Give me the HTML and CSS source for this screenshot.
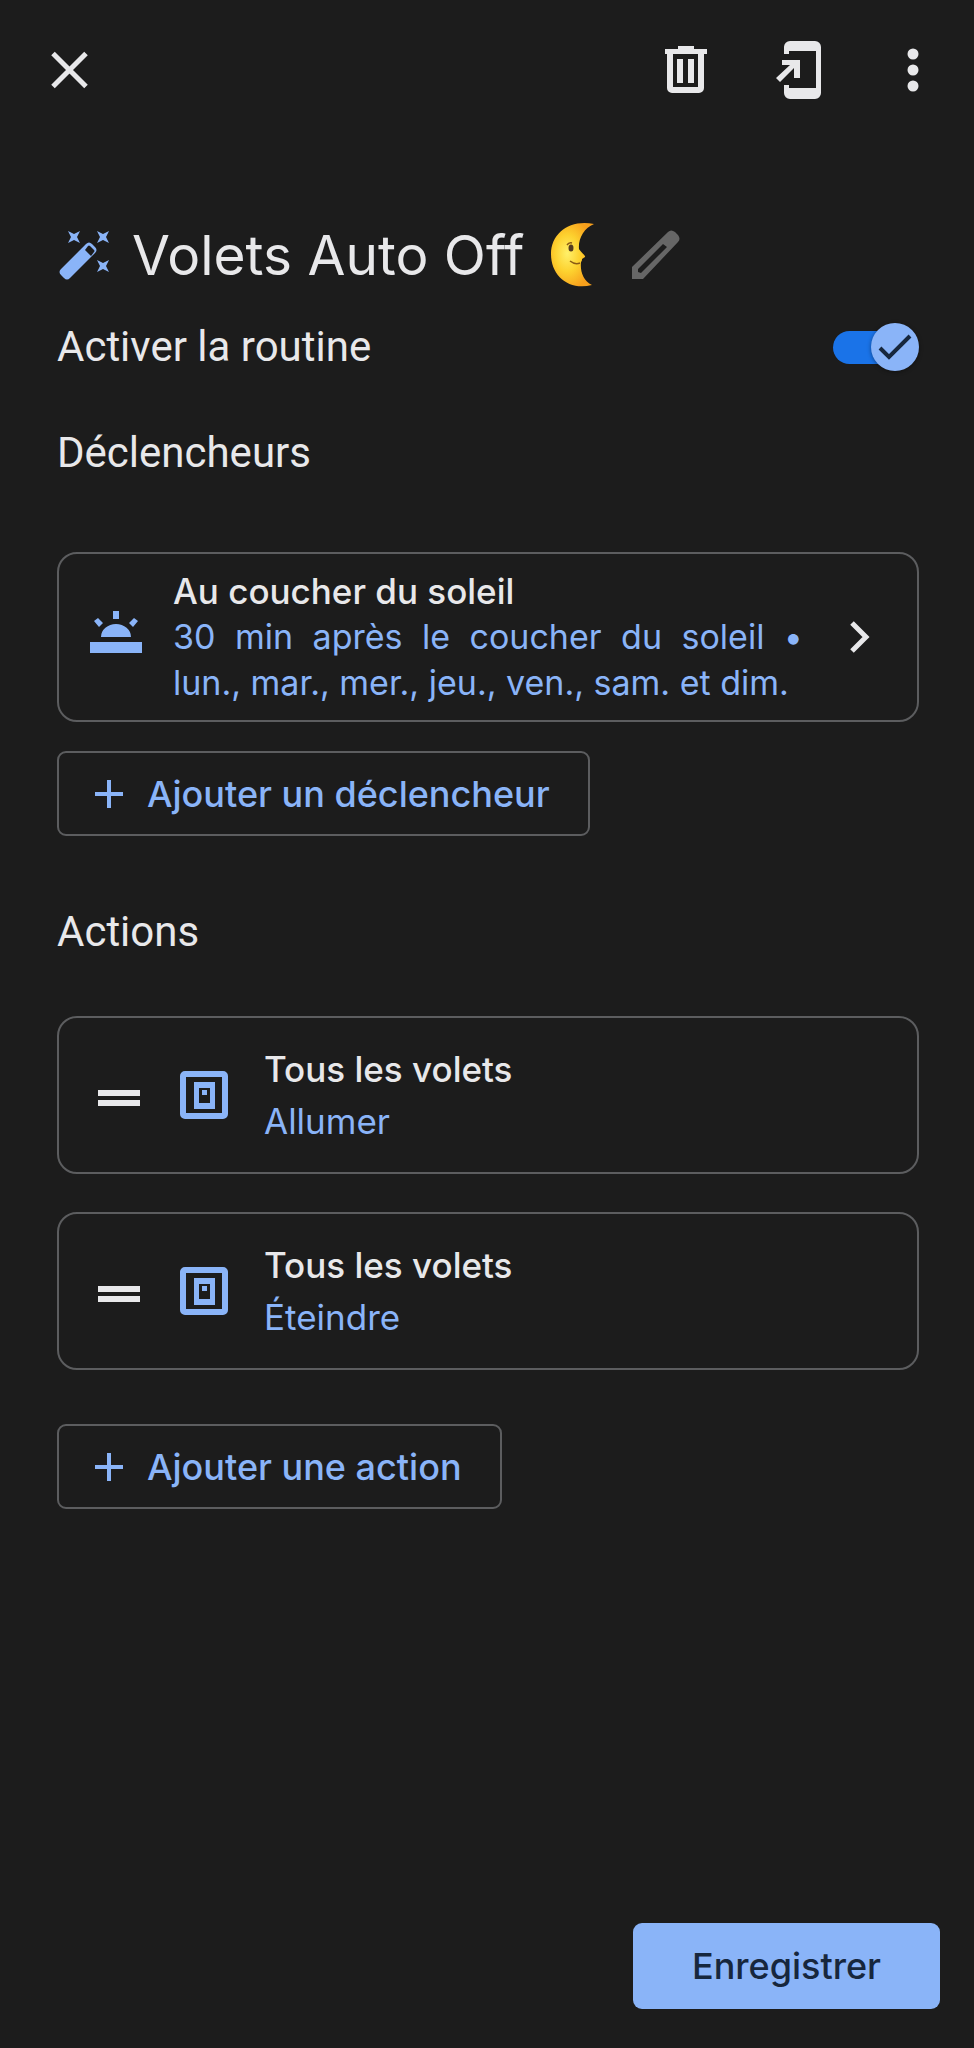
FILE: index.html
```html
<!DOCTYPE html>
<html lang="fr">
<head>
  <meta charset="UTF-8">
  <meta name="viewport" content="width=device-width, initial-scale=1">
  <title>Volets Auto Off</title>
  <link rel="stylesheet" href="styles.css">
</head>
<body>
  <header class="barre">
    <button class="icone" aria-label="Fermer">
      <svg width="60" height="60" viewBox="0 0 60 60"><path d="M13 13.500L46 46.500M46 13.500L13 46.500" stroke="currentColor" stroke-width="5"/></svg>
    </button>
    <div class="outils">
      <button class="icone" aria-label="Supprimer">
        <svg width="60" height="60" viewBox="0 0 60 60" fill="currentColor">
          <path fill-rule="evenodd" d="M22 6h16v3h13v5h-3v34a5 5 0 0 1-5 5H16a5 5 0 0 1-5-5V14H9V9h13zM17 14v33h25V14z"/>
          <path d="M21 19h6v24h-6zM32 19h6v24h-6z"/>
        </svg>
      </button>
      <button class="icone" aria-label="Ajouter à l'écran d'accueil">
        <svg width="60" height="60" viewBox="0 0 60 60" fill="currentColor">
          <path d="M15 14V7a6 6 0 0 1 6-6h25a6 6 0 0 1 6 6v46a6 6 0 0 1-6 6H21a6 6 0 0 1-6-6v-8h5v3h27V11H20v3z"/>
          <path d="M13 20h18v18h-6V28L11 42l-4-4 14-13h-8z"/>
        </svg>
      </button>
      <button class="icone" aria-label="Plus d'options">
        <svg width="60" height="60" viewBox="0 0 60 60" fill="currentColor"><circle cx="31" cy="14" r="5.500"/><circle cx="31" cy="30" r="5.500"/><circle cx="31" cy="46" r="5.500"/></svg>
      </button>
    </div>
  </header>

  <main class="contenu">
    <div class="titre">
      <svg class="bleu" width="54" height="54" viewBox="0 0 54 54" fill="currentColor">
        <path fill-rule="evenodd" d="M4 41L29 16q3-3 6 0l3 3q3 3 0 6L13 50q-3 3-6 0l-3-3q-3-3 0-6zM28 22l6 6 3-4q1-1 0-2l-4-4q-1-1-2 0z"/>
        <path d="M11 3l6 3 6-3-3 6 3 6-6-3-6 3 3-6zM40 3l6 3 6-3-3 6 3 6-6-3-6 3 3-6zM40 32l6 3 6-3-3 6 3 6-6-3-6 3 3-6z"/>
      </svg>
      <h1>Volets Auto Off</h1>
      <svg class="lune" width="46" height="66" viewBox="0 0 46 66" role="img" aria-label="Lune">
        <defs>
          <radialGradient id="jaune" cx="38%" cy="48%" r="58%">
            <stop offset="0" stop-color="#fff06a"/>
            <stop offset=".5" stop-color="#fdd22f"/>
            <stop offset="1" stop-color="#f7a01c"/>
          </radialGradient>
        </defs>
        <path d="M44 2C20-3 1 11 1 32c0 22 18 37 41 31-9-4-12-14-11-23 1-1 1-2 1-3l3-2c1-1-5-6-6-8C28 17 34 6 44 2z" fill="url(#jaune)"/>
        <ellipse cx="21" cy="26" rx="2.500" ry="3.500" fill="#543b20"/>
        <path d="M17 23q2-3 5-2M20 39q5 4 10 2" fill="none" stroke="#8a5a14" stroke-width="1.500"/>
      </svg>
      <button class="crayon" aria-label="Modifier le nom">
        <svg width="50" height="50" viewBox="0 0 50 50" fill="currentColor">
          <path fill-rule="evenodd" d="M1 37L37 2q3-3 7 0l3 3q3 4 0 7L12 49H1zM7 39v3l3 1 26-26-4-3z"/>
        </svg>
      </button>
    </div>

    <div class="ligne">
      <label for="activer">Activer la routine</label>
      <span class="bascule">
        <input type="checkbox" id="activer" checked>
        <svg class="coche" width="48" height="48" viewBox="0 0 48 48"><path d="M9 25l9 9L39 13" fill="none" stroke="#17273d" stroke-width="4"/></svg>
      </span>
    </div>

    <h2>Déclencheurs</h2>
    <a class="carte declencheur" href="#">
      <svg class="bleu" width="54" height="54" viewBox="0 0 54 54" fill="currentColor">
        <path d="M1 32h52v11H1zM12 27a15 13 0 0 1 30 0zM24 1h6v8h-6zM5 11l4-3 5 5-4 4zM49 11l-4-3-5 5 4 4z"/>
      </svg>
      <div class="texte">
        <h3>Au coucher du soleil</h3>
        <p>30 min après le coucher du soleil • lun., mar., mer., jeu., ven., sam. et dim.</p>
      </div>
      <svg width="24" height="32" viewBox="0 0 24 32"><path d="M3 2l14 14L3 30" fill="none" stroke="currentColor" stroke-width="5"/></svg>
    </a>
    <button class="ajouter">
      <svg width="28" height="28" viewBox="0 0 28 28"><path d="M14 0v28M0 14h28" stroke="currentColor" stroke-width="4"/></svg>
      Ajouter un déclencheur
    </button>

    <h2 class="actions">Actions</h2>
    <ul class="liste">
      <li class="carte action">
        <svg width="44" height="24" viewBox="0 0 44 24" fill="currentColor"><path d="M1 7h42v6H1zM1 17h42v6H1z"/></svg>
        <svg class="bleu" width="48" height="48" viewBox="0 0 48 48" fill="currentColor">
          <path fill-rule="evenodd" d="M5 0h38a5 5 0 0 1 5 5v38a5 5 0 0 1-5 5H5a5 5 0 0 1-5-5V5a5 5 0 0 1 5-5zM6 6v36h36V6zM14 11h21v27H14zM19 17v15h11V17z"/>
          <path d="M22 19h5v5h-5z"/>
        </svg>
        <div class="texte">
          <h3>Tous les volets</h3>
          <p>Allumer</p>
        </div>
      </li>
      <li class="carte action">
        <svg width="44" height="24" viewBox="0 0 44 24" fill="currentColor"><path d="M1 7h42v6H1zM1 17h42v6H1z"/></svg>
        <svg class="bleu" width="48" height="48" viewBox="0 0 48 48" fill="currentColor">
          <path fill-rule="evenodd" d="M5 0h38a5 5 0 0 1 5 5v38a5 5 0 0 1-5 5H5a5 5 0 0 1-5-5V5a5 5 0 0 1 5-5zM6 6v36h36V6zM14 11h21v27H14zM19 17v15h11V17z"/>
          <path d="M22 19h5v5h-5z"/>
        </svg>
        <div class="texte">
          <h3>Tous les volets</h3>
          <p>Éteindre</p>
        </div>
      </li>
    </ul>
    <button class="ajouter">
      <svg width="28" height="28" viewBox="0 0 28 28"><path d="M14 0v28M0 14h28" stroke="currentColor" stroke-width="4"/></svg>
      Ajouter une action
    </button>
  </main>

  <footer class="pied">
    <button class="enregistrer">Enregistrer</button>
  </footer>
</body>
</html>
```

FILE: styles.css
```css
* {
  box-sizing: border-box;
}
body {
  margin: 0;
  min-height: 100vh;
  display: flex;
  flex-direction: column;
  background-color: #1c1c1c;
  color: #e8e8ea;
  font-family: Inter, Roboto, sans-serif;
  font-size: 36px;
}
h1, h2, h3, p, ul {
  margin: 0;
  padding: 0;
  font-weight: 400;
}
svg {
  display: block;
  flex: none;
}
button {
  border: 0;
  padding: 0;
  background: none;
  color: inherit;
  font: inherit;
  cursor: pointer;
}
.bleu {
  color: #8ab4f8;
}
.barre {
  display: flex;
  justify-content: space-between;
  padding: 40px 32px 40px 40px;
}
.outils {
  display: flex;
  gap: 53px;
}
.contenu {
  flex: 1;
  padding: 75px 55px 0 57px;
}
.titre {
  display: flex;
  align-items: center;
  height: 80px;
}
.titre h1 {
  margin-left: 21px;
  font-size: 55px;
  line-height: 80px;
}
.lune {
  margin-left: 26px;
}
.crayon {
  margin-left: 35px;
  color: #666;
}
.ligne {
  display: flex;
  justify-content: space-between;
  align-items: center;
  margin-top: 24px;
  font-family: Roboto, sans-serif;
  font-size: 42px;
  line-height: 56px;
}
.bascule {
  position: relative;
  display: flex;
  align-items: center;
  width: 86px;
  height: 48px;
}
.bascule input {
  appearance: none;
  width: 72px;
  height: 33px;
  margin: 0;
  border-radius: 17px;
  background-color: #5f6368;
}
.bascule input:checked {
  background-color: #1a73e8;
}
.coche {
  position: absolute;
  right: 0;
  border-radius: 50%;
  background-color: #8ab4f8;
  box-shadow: 0 1px 4px rgba(0, 0, 0, 0.4);
  pointer-events: none;
}
h2 {
  margin: 50px 0 71px;
  font-family: Roboto, sans-serif;
  font-size: 42px;
  line-height: 56px;
}
h2.actions {
  margin: 68px 0 56px;
}
.carte {
  display: flex;
  align-items: center;
  border: 2px solid #5c5d5f;
  border-radius: 20px;
  color: inherit;
  text-decoration: none;
}
.carte h3 {
  font-size: 35px;
  font-weight: 500;
}
.carte p {
  color: #8ab4f8;
  font-size: 35px;
}
.declencheur {
  min-height: 170px;
  padding: 0 44px 0 30px;
  line-height: 46px;
}
.declencheur .texte {
  flex: 1;
  margin: 0 46px 0 30px;
  text-align: justify;
}
.declencheur p {
  font-size: 34px;
}
.ajouter {
  display: flex;
  align-items: center;
  gap: 24px;
  height: 85px;
  margin-top: 29px;
  padding: 0 38px 0 36px;
  border: 2px solid #5c5d5f;
  border-radius: 9px;
  color: #8ab4f8;
  font-weight: 500;
}
.liste {
  display: grid;
  gap: 38px;
  margin-bottom: 54px;
  list-style: none;
}
.action {
  min-height: 158px;
  padding: 0 38px;
  line-height: 52px;
}
.action .bleu {
  margin: 0 36px 0 39px;
}
.pied {
  display: flex;
  justify-content: flex-end;
  padding: 44px 34px 39px;
}
.enregistrer {
  height: 86px;
  padding: 0 59px;
  border-radius: 9px;
  background-color: #8ab4f8;
  color: #17273d;
  font-weight: 500;
}
```
